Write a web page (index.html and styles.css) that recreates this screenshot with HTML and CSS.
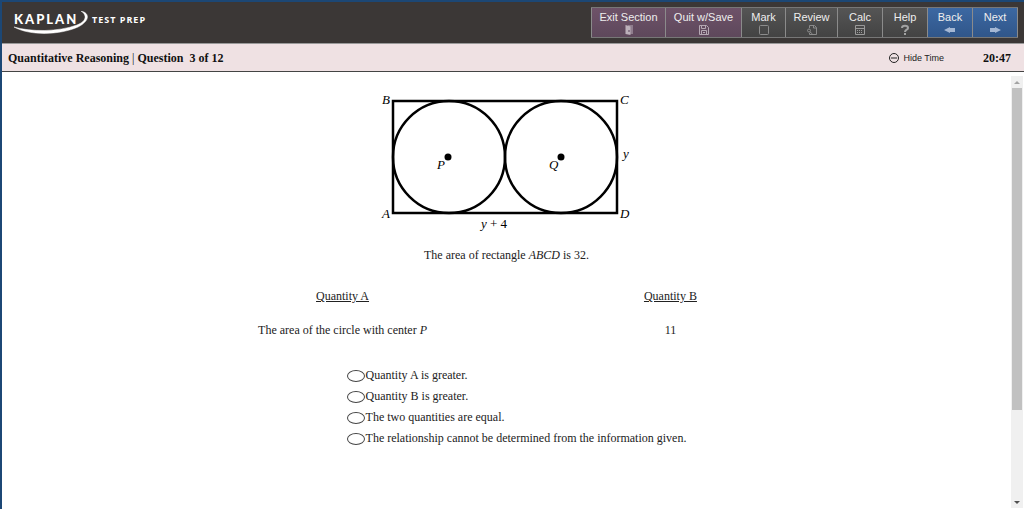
FILE: index.html
```html
<!DOCTYPE html>
<html lang="en">
<head>
    <meta charset="UTF-8">
    <meta name="viewport" content="width=device-width, initial-scale=1.0">
    <title>Kaplan Test Prep - Quantitative Reasoning</title>
    <link rel="stylesheet" href="styles.css">
</head>
<body>
    <header class="top-bar">
        <div class="logo">
            <div class="logo-mark">
                <span class="logo-name">KAPLAN</span>
                <svg class="logo-swoosh" width="76" height="24" viewBox="0 0 76 24">
                    <path d="M0 16 C16 25 46 24 64 16 C76 10 76 2 67 0 C73 4 73 10 63 14 C44 21 17 21 0 16 Z" fill="#fff" stroke="#fff" stroke-width="0.500"/>
                </svg>
            </div>
            <span class="logo-sub">TEST PREP</span>
        </div>
        <nav class="toolbar">
            <button class="tool-btn exit">Exit Section
                <svg width="12" height="12" viewBox="0 0 12 12"><path d="M5 1h5v9H5z" fill="#8f7d8d"/><path d="M2.500 1l5 1.500V11l-5-1z" fill="#bcb0ba"/><path d="M6 6v2" stroke="#59455a"/></svg>
            </button>
            <button class="tool-btn exit">Quit w/Save
                <svg width="12" height="12" viewBox="0 0 12 12" fill="none" stroke="#b5a8b3"><path d="M1.500 1.500h7l2 2v7h-9zM3.500 1.500v3h4v-3M3.500 10.500v-4h5v4M5 8.500h2"/></svg>
            </button>
            <button class="tool-btn">Mark
                <svg width="12" height="12" viewBox="0 0 12 12" fill="none" stroke="#8c8c8c"><rect x="1.500" y="1.500" width="9" height="9" rx="1"/></svg>
            </button>
            <button class="tool-btn">Review
                <svg width="12" height="12" viewBox="0 0 12 12" fill="none" stroke="#8c8c8c"><path d="M3.500 4V1.500h5l2 2v7h-7V9M7.500 1.500V4h3"/><circle cx="3" cy="6.500" r="1.500"/><path d="M4 8l2.500 2"/></svg>
            </button>
            <button class="tool-btn">Calc
                <svg width="12" height="12" viewBox="0 0 12 12" fill="none" stroke="#9a9a9a"><path d="M1.500 1.500h9v9h-9zM1.500 4.500h9"/><path d="M3 6.500h6M3 8.500h6" stroke-dasharray="1 1"/></svg>
            </button>
            <button class="tool-btn">Help
                <svg width="12" height="12" viewBox="0 0 12 12" fill="none" stroke="#a3a3a3" stroke-width="2"><path d="M3 4C3 1 9 1 9 4C9 6 6 5.500 6 8M6 9v2"/></svg>
            </button>
            <button class="tool-btn move">Back
                <svg width="12" height="12" viewBox="0 0 12 12"><path d="M0 6l6-3v1h5v4H6v1z" fill="#a4b7d4"/></svg>
            </button>
            <button class="tool-btn move">Next
                <svg width="12" height="12" viewBox="0 0 12 12"><path d="M12 6L6 3v1H1v4h5v1z" fill="#a4b7d4"/></svg>
            </button>
        </nav>
    </header>

    <div class="section-bar">
        <h1 class="section-title">Quantitative Reasoning <span class="divider">|</span> Question &nbsp;3 of 12</h1>
        <button class="hide-time">
            <svg width="10" height="10" viewBox="0 0 10 10" fill="none" stroke="#222"><circle cx="5" cy="5" r="4.500"/><path d="M2 5h6"/></svg>
            Hide Time
        </button>
        <span class="timer">20:47</span>
    </div>

    <div class="content">
        <main class="question">
            <!-- Rectangle ABCD with circles P and Q -->
            <svg class="figure" width="260" height="144" viewBox="0 0 260 144">
                <g fill="none" stroke="#000" stroke-width="2.500">
                    <rect x="16" y="11" width="224" height="112"/>
                    <circle cx="72" cy="67" r="56"/>
                    <circle cx="184" cy="67" r="56"/>
                </g>
                <circle cx="71" cy="67" r="3.500"/>
                <circle cx="184" cy="67" r="3.500"/>
                <g class="figure-label">
                    <text x="5" y="14">B</text>
                    <text x="243" y="14">C</text>
                    <text x="5" y="128">A</text>
                    <text x="243" y="128">D</text>
                    <text x="60" y="79">P</text>
                    <text x="172" y="79">Q</text>
                    <text x="246" y="68">y</text>
                    <text x="104" y="138">y<tspan class="upright"> + 4</tspan></text>
                </g>
            </svg>
            <p class="given">The area of rectangle <i>ABCD</i> is 32.</p>

            <table class="quantities">
                <thead>
                    <tr><th>Quantity A</th><th>Quantity B</th></tr>
                </thead>
                <tbody>
                    <tr><td>The area of the circle with center <i>P</i></td><td>11</td></tr>
                </tbody>
            </table>

            <form class="choices">
                <label class="choice"><input type="radio" name="answer">Quantity A is greater.</label>
                <label class="choice"><input type="radio" name="answer">Quantity B is greater.</label>
                <label class="choice"><input type="radio" name="answer">The two quantities are equal.</label>
                <label class="choice"><input type="radio" name="answer">The relationship cannot be determined from the information given.</label>
            </form>
        </main>
        <div class="scrollbar">
            <svg width="12" height="12" viewBox="0 0 12 12"><path d="M3 8l3-3 3 3z" fill="#a3a3a3"/></svg>
            <div class="track"><div class="thumb"></div></div>
            <svg width="12" height="12" viewBox="0 0 12 12"><path d="M3 5l3 3 3-3z" fill="#505050"/></svg>
        </div>
    </div>
</body>
</html>
```
FILE: styles.css
```css
* {
    box-sizing: border-box;
}
body {
    font-family: "Liberation Serif", "Times New Roman", serif;
    font-size: 12px;
    line-height: 15px;
    margin: 0;
    min-height: 100vh;
    display: flex;
    flex-direction: column;
    border-top: 2px solid #1c4775;
    border-left: 2px solid #1c4775;
    background: #fff;
    color: #222;
}
.top-bar {
    display: flex;
    justify-content: space-between;
    align-items: center;
    height: 41px;
    padding: 0 6px 0 12px;
    background: #3b3736;
}
.logo {
    display: flex;
    align-items: center;
    padding-bottom: 6px;
    font-family: Lato, sans-serif;
    color: #fff;
}
.logo-mark {
    position: relative;
    width: 78px;
}
.logo-name {
    font-size: 13px;
    font-weight: 900;
    letter-spacing: 2px;
}
.logo-swoosh {
    position: absolute;
    left: 0;
    top: -1px;
}
.logo-sub {
    font-size: 9px;
    font-weight: 700;
    font-family: "Open Sans", sans-serif;
    letter-spacing: 1px;
}
.toolbar {
    display: grid;
    grid-template-columns: 75px 76px 44px 52px repeat(4, 45px);
    border-top: 1px solid #777;
    border-bottom: 1px solid #777;
}
.tool-btn {
    display: flex;
    flex-direction: column;
    align-items: center;
    padding: 2px 0 1px;
    border: none;
    border-right: 1px solid #8b8b8b;
    background: linear-gradient(#555, #434343);
    color: #eee;
    font-family: "Liberation Sans", Arial, sans-serif;
    font-size: 11px;
    line-height: 14px;
    cursor: pointer;
}
.tool-btn:first-child {
    border-left: 1px solid #8b8b8b;
}
.tool-btn.exit {
    background: linear-gradient(#6e5269, #5e485b);
}
.tool-btn.move {
    background: linear-gradient(#3c68a2, #30568a);
}
.section-bar {
    display: flex;
    align-items: center;
    height: 29px;
    padding: 1px 13px 0 6px;
    background: #efe1e3;
    border-top: 1px solid #999;
    border-bottom: 1px solid #444;
    color: #111;
}
.section-title {
    flex: 1;
    margin: 0;
    font-size: 12px;
    line-height: 15px;
}
.divider {
    font-weight: normal;
}
.hide-time {
    display: flex;
    align-items: center;
    gap: 4px;
    margin-right: 39px;
    padding: 0;
    border: none;
    background: none;
    color: #222;
    font-family: "Liberation Sans", Arial, sans-serif;
    font-size: 9px;
    cursor: pointer;
}
.timer {
    font-size: 12px;
    font-weight: bold;
}
.content {
    flex: 1;
    display: flex;
}
.question {
    flex: 1;
    display: flex;
    flex-direction: column;
    align-items: center;
    padding-top: 18px;
}
.figure-label {
    font-size: 13px;
    font-style: italic;
}
.upright {
    font-style: normal;
}
.given {
    margin: 14px 0 26px;
}
.quantities {
    width: 65%;
    table-layout: fixed;
    border-collapse: collapse;
    text-align: center;
}
.quantities th {
    padding: 0 0 19px;
    font-weight: normal;
    text-decoration: underline;
}
.quantities td {
    padding: 0;
}
.choices {
    display: flex;
    flex-direction: column;
    gap: 6px;
    margin: 30px 0 0 20px;
}
.choice {
    display: flex;
    align-items: center;
    gap: 1px;
}
.choice input {
    appearance: none;
    width: 18px;
    height: 12px;
    margin: 0;
    border: 1px solid #444;
    border-radius: 50%;
    background: #fff;
}
.choice input:checked {
    background: #444;
}
.scrollbar {
    display: flex;
    flex-direction: column;
    width: 12px;
    margin: 4px 1px 1px 0;
    background: #f0f0f0;
}
.track {
    flex: 1;
    padding: 0 1px;
}
.thumb {
    height: 79%;
    background: #c1c1c1;
}
```
